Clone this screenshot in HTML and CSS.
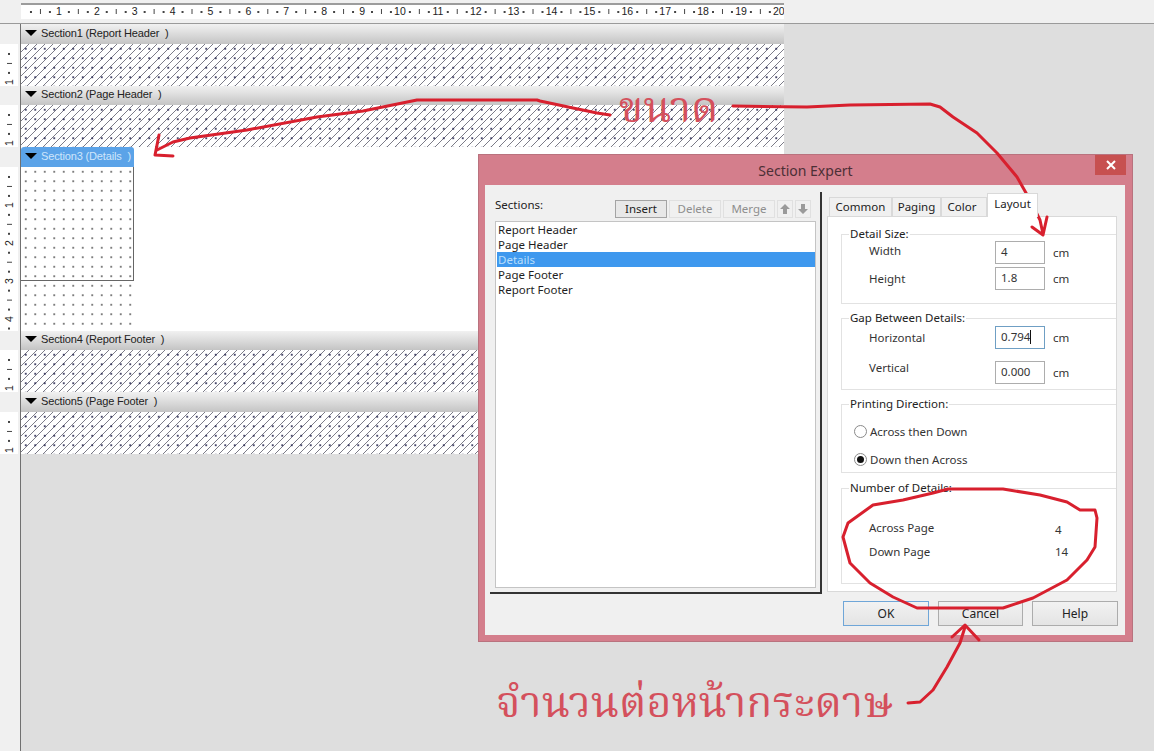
FILE: index.html
```html
<!DOCTYPE html>
<html lang="th">
<head>
<meta charset="utf-8">
<title>Section Expert</title>
<link rel="stylesheet" href="styles.css">
</head>
<body>
<div class="screen">
  <div class="topbar">
    <div class="ruler">
      <span>1</span><span>2</span><span>3</span><span>4</span><span>5</span><span>6</span><span>7</span><span>8</span><span>9</span><span>10</span>
      <span>11</span><span>12</span><span>13</span><span>14</span><span>15</span><span>16</span><span>17</span><span>18</span><span>19</span><span>20</span>
    </div>
  </div>
  <div class="work">
    <div class="gutter">
      <div class="gap g20"></div>
      <div class="vcell h42"><span>1</span></div>
      <div class="gap g19"></div>
      <div class="vcell h42"><span>1</span></div>
      <div class="gap g20"></div>
      <div class="vcell h164"><span>1</span><span>2</span><span>3</span><span>4</span></div>
      <div class="gap g19"></div>
      <div class="vcell h42"><span>1</span></div>
      <div class="gap g20"></div>
      <div class="vcell h42"><span>1</span></div>
    </div>
    <div class="report">
      <div class="sec-head first"><i class="tri"></i>Section1 (Report Header&nbsp; )</div>
      <div class="hatch"></div>
      <div class="sec-head"><i class="tri"></i>Section2 (Page Header&nbsp; )</div>
      <div class="hatch"></div>
      <div class="details-row">
        <div class="details-col">
          <div class="sec-head active"><i class="tri"></i>Section3 (Details&nbsp; )</div>
          <div class="dots"><div class="detail-size"></div></div>
        </div>
      </div>
      <div class="sec-head"><i class="tri"></i>Section4 (Report Footer&nbsp; )</div>
      <div class="hatch"></div>
      <div class="sec-head tall"><i class="tri"></i>Section5 (Page Footer&nbsp; )</div>
      <div class="hatch"></div>
    </div>
  </div>

  <div class="dialog">
    <div class="title">
      <span>Section Expert</span>
      <div class="close"><svg width="10" height="10" viewBox="0 0 10 10"><path d="M1 1 9 9M9 1 1 9" stroke="#fff" stroke-width="2" fill="none"/></svg></div>
    </div>
    <div class="client">
      <div class="panes">
        <div class="left-pane">
          <div class="list-bar">
            <span class="list-label">Sections:</span>
            <div class="list-tools">
              <button class="btn main">Insert</button>
              <button class="btn off">Delete</button>
              <button class="btn off">Merge</button>
              <button class="btn off sq"><svg width="10" height="10" viewBox="0 0 10 10"><path d="M5 0 10 5H7V10H3V5H0Z" fill="#9a9a9a"/></svg></button>
              <button class="btn off sq"><svg width="10" height="10" viewBox="0 0 10 10"><path d="M5 10 10 5H7V0H3V5H0Z" fill="#9a9a9a"/></svg></button>
            </div>
          </div>
          <ul class="list">
            <li>Report Header</li>
            <li>Page Header</li>
            <li class="sel">Details</li>
            <li>Page Footer</li>
            <li>Report Footer</li>
          </ul>
        </div>
        <div class="right-pane">
          <div class="tabs">
            <div class="tab t1">Common</div>
            <div class="tab t2">Paging</div>
            <div class="tab t3">Color</div>
            <div class="tab on">Layout</div>
          </div>
          <div class="tab-panel">
            <fieldset class="fs fs1">
              <legend>Detail Size:</legend>
              <div class="rows tight">
                <span class="lbl first-lbl">Width</span><div class="field">4</div><span class="unit">cm</span>
                <span class="lbl">Height</span><div class="field">1.8</div><span class="unit">cm</span>
              </div>
            </fieldset>
            <fieldset class="fs fs2">
              <legend>Gap Between Details:</legend>
              <div class="rows wide">
                <span class="lbl">Horizontal</span><div class="field focus">0.794<i class="caret"></i></div><span class="unit">cm</span>
                <span class="lbl up">Vertical</span><div class="field">0.000</div><span class="unit">cm</span>
              </div>
            </fieldset>
            <fieldset class="fs fs3">
              <legend>Printing Direction:</legend>
              <div class="radio"><i class="dot"></i>Across then Down</div>
              <div class="radio"><i class="dot checked"></i>Down then Across</div>
            </fieldset>
            <fieldset class="fs fs4">
              <legend>Number of Details:</legend>
              <div class="counts">
                <span>Across Page</span><span class="val-low">4</span>
                <span>Down Page</span><span>14</span>
              </div>
            </fieldset>
          </div>
        </div>
      </div>
      <div class="footer">
        <button class="btn big default">OK</button>
        <button class="btn big mid">Cancel</button>
        <button class="btn big">Help</button>
      </div>
    </div>
  </div>

  <svg class="ink" width="1154" height="751" viewBox="0 0 1154 751">
    <path d="M610 115 597 113 573 108 540 101 537 100H417L363 111 317 117 247 130 190 138 173 142 157 150M159 135 155 155 173 156"/>
    <path d="M733 106 807 107 850 105 930 104 940 107 953 117 977 133 997 153 1017 177 1030 200 1040 220 1043 234M1032 227 1043 235 1047 217"/>
    <path d="M948 489H1003L1040 495 1067 502 1080 510H1095L1097 518 1095 547 1087 560 1067 580 1033 598 1003 608H917L893 597 870 583 850 563 843 537 848 523 873 505 903 500 933 493Z"/>
    <path d="M908 703 920 702 933 690 947 667 960 643 965 627M952 637 965 625 979 640"/>
  </svg>
  <div class="note size">ขนาด</div>
  <div class="note count">จำนวนต่อหน้ากระดาษ</div>
</div>
</body>
</html>
```
FILE: styles.css
```css
* { box-sizing: border-box; }
html, body { margin: 0; padding: 0; }
body { font-family: "Liberation Sans", Arial, sans-serif; color: #222; }

.screen { position: relative; width: 1154px; height: 751px; overflow: hidden; background: #dedede; }

/* top ruler */
.topbar { height: 24px; padding: 3px 0 0 21px; background: #f0f0f0; border-bottom: 1px solid #9a9a9a; }
.ruler {
  display: flex; width: 763px; height: 16px; padding-left: 19px; overflow: hidden;
  background-color: #fff; border-top: 2px solid #9c9c9c;
  background-image:
    linear-gradient(90deg, transparent 9px, #444 9px 10.5px, transparent 10.5px 28px, #444 28px 29.5px, transparent 29.5px),
    linear-gradient(90deg, transparent 18.5px, #444 18.5px 19.5px, transparent 19.5px);
  background-size: 37.9px 2px, 37.9px 5px;
  background-position: 0 6px, 0 4px;
  background-repeat: repeat-x;
}
.ruler span { flex: 0 0 37.9px; text-align: center; font-size: 10.5px; line-height: 13px; color: #222; }

/* work area */
.work { display: flex; height: 727px; }
.gutter { flex: 0 0 21px; display: flex; flex-direction: column; background: #f0f0f0; border-right: 1px solid #707070; padding-right: 2px; }
.gap.g19 { height: 19px; } .gap.g20 { height: 20px; }
.vcell {
  display: flex; flex-direction: column; align-items: center; padding-top: 3px; background-color: #fff;
  background-image:
    linear-gradient(transparent 9px, #444 9px 10.5px, transparent 10.5px 28px, #444 28px 29.5px, transparent 29.5px),
    linear-gradient(transparent 18.5px, #444 18.5px 19.5px, transparent 19.5px);
  background-size: 2px 37.9px, 5px 37.9px;
  background-position: center 0, center 0;
  background-repeat: repeat-y;
}
.vcell.h42 { height: 42px; } .vcell.h164 { height: 164px; }
.vcell span {
  flex: 0 0 37.9px; width: 18px; display: flex; align-items: center; justify-content: flex-start;
  font-size: 10.5px; line-height: 10px; color: #222;
  writing-mode: vertical-rl; transform: rotate(180deg);
}

.report { flex: 0 0 763px; display: flex; flex-direction: column; }
.sec-head {
  display: flex; align-items: center; height: 19px; padding: 0 0 3px 4px;
  font-size: 11px; letter-spacing: -.15px; white-space: pre; color: #222;
  background: linear-gradient(#f1f1f1, #e2e2e2 35%, #c4c4c4);
}
.sec-head.first, .sec-head.tall { height: 20px; padding-bottom: 2px; }
.tri { width: 0; height: 0; margin-right: 4px; border-left: 6px solid transparent; border-right: 6px solid transparent; border-top: 6px solid #000; }
.hatch {
  height: 42px; background-color: #fff;
  background-image:
    radial-gradient(circle at 50% 50%, #20204a 0 .6px, transparent 1px),
    linear-gradient(135deg, transparent 0 46%, #7c7c88 46% 54%, transparent 54%);
  background-size: 9.5px 9.5px, 8px 8px;
}
.details-row { height: 184px; background: #fff; }
.details-col { width: 113px; }
.sec-head.active { height: 20px; padding-bottom: 2px; background: #5ba3e8; color: #cfe6fb; border-radius: 3px 3px 0 0; }
.dots {
  height: 164px;
  background-image: radial-gradient(circle at 50% 50%, #444 0 .55px, transparent .95px);
  background-size: 9.5px 9.5px;
}
.detail-size { height: 114px; border-right: 1px solid #666; border-bottom: 1px solid #666; }

/* dialog */
.dialog {
  position: absolute; left: 478px; top: 154px; width: 655px; height: 488px;
  display: flex; flex-direction: column; background: #d47e8c; border: 1px solid #b9727e;
  font-family: "Noto Sans", "Open Sans", sans-serif;
}
.title { position: relative; flex: 0 0 30px; display: flex; align-items: center; justify-content: center; font-size: 14px; color: #4c2f36; }
.close { position: absolute; right: 6px; top: 0; width: 31px; height: 20px; background: #c75050; display: flex; align-items: center; justify-content: center; }
.client { flex: 1; margin: 0 7px 6px 6px; padding: 7px 7px 0 5px; background: #f0f0f0; display: flex; flex-direction: column; }
.panes { display: flex; height: 402px; }
.left-pane { flex: 0 0 332px; padding: 0 4px 0 5px; border-right: 2px solid #333; border-bottom: 2px solid #333; font-size: 12px; }
.list-bar { display: flex; justify-content: space-between; height: 29px; }
.list-label { font-size: 11.5px; line-height: 16px; padding-top: 5px; color: #222; }
.list-tools { display: flex; gap: 2px; padding: 8px 5px 0 0; }
.btn { font: inherit; font-size: 11.5px; color: #222; background: #ededed; border: 1px solid #acacac; padding: 0; height: 18px; width: 52px; line-height: 16px; }
.btn.main { background: #e8e8e8; border-color: #a4a4a4; }
.btn.off { color: #8e8e8e; background: #f0f0f0; border-color: #e0e0e0; }
.btn.sq { width: 16px; display: flex; align-items: center; justify-content: center; }
.list { list-style: none; margin: 0; padding: 0 0 0 1px; height: 367px; background: #fff; border: 1px solid #c4c4c4; font-size: 11.5px; line-height: 15px; }
.list li { padding-left: 1px; color: #1e1e1e; }
.list li.sel { background: #3e98ee; color: #b8defc; }

.right-pane { margin: 1px 0 0 5px; flex: 0 0 290px; display: flex; flex-direction: column; font-size: 11.5px; }
.tabs { display: flex; align-items: flex-end; height: 24px; padding-left: 2px; margin-bottom: -1px; }
.tab { height: 20px; line-height: 17px; text-align: center; background: #f0f0f0; border: 1px solid #d9d9d9; border-bottom: 0; color: #222; }
.tab.t1 { width: 63px; } .tab.t2 { width: 49px; } .tab.t3 { width: 46px; padding-right: 4px; }
.tab.on { width: 51px; height: 24px; line-height: 20px; background: #fff; position: relative; z-index: 1; }
.tab-panel { height: 376px; background: #fff; border: 1px solid #d9d9d9; padding: 9px 0 0 13px; }
.fs { margin: 0 0 6px; padding: 0 0 0 27px; border: 1px solid #e2e2e2; border-right: 0; min-width: 0; }
.fs legend { margin-left: -20px; padding: 0 1px; font-size: 11.5px; line-height: 16px; color: #222; }
.fs1 { height: 78px; } .fs2 { height: 80px; } .fs3 { height: 77px; padding-left: 12px; margin-bottom: 7px; } .fs4 { height: 104px; }
.fs3 legend { margin-left: -5px; margin-bottom: -1px; }
.rows { display: grid; grid-template-columns: 126px 50px 1fr; align-items: center; }
.rows.tight { row-gap: 3px; margin-top: -1px; }
.rows.wide { row-gap: 12px; }
.lbl { line-height: 16px; color: #333; }
.lbl.first-lbl { margin-bottom: 3px; }
.lbl.up { align-self: start; margin-top: -1px; }
.unit { padding-left: 8px; color: #333; }
.field { height: 23px; padding-left: 5px; line-height: 19px; border: 1px solid #adadad; background: #fff; color: #333; }
.field.focus { border-color: #6f9fc4; }
.caret { display: inline-block; width: 1px; height: 14px; background: #111; vertical-align: -3px; }
.radio { display: flex; align-items: center; gap: 3px; height: 16px; margin-top: 12px; color: #333; }
.dot { display: flex; align-items: center; justify-content: center; width: 13px; height: 13px; border: 1px solid #8a8a8a; border-radius: 50%; background: #fff; }
.dot.checked::after { content: ""; width: 7px; height: 7px; border-radius: 50%; background: #111; }
.counts { display: grid; grid-template-columns: 186px 1fr; row-gap: 8px; margin-top: 24px; line-height: 16px; color: #333; }
.val-low { padding-top: 2px; margin-bottom: -2px; }

.footer { display: flex; justify-content: flex-end; gap: 9px; padding: 7px 0 0 0; }
.btn.big { width: 86px; height: 25px; font-size: 12px; line-height: 22px; background: linear-gradient(#f2f2f2, #e4e4e4); }
.btn.big.mid { width: 85px; }
.btn.default { border-color: #6fa6d8; }

/* hand-drawn annotations */
.ink { position: absolute; left: 0; top: 0; pointer-events: none; }
.ink path { fill: none; stroke: #d8202e; stroke-width: 3; stroke-linejoin: round; stroke-linecap: round; }
.note { position: absolute; color: #d4505c; line-height: 1; white-space: nowrap; font-family: "Noto Serif Thai", "Liberation Serif", serif; }
.note.size { left: 619px; top: 89px; font-size: 43px; }
.note.count { left: 496px; top: 684px; font-size: 43px; }
```
